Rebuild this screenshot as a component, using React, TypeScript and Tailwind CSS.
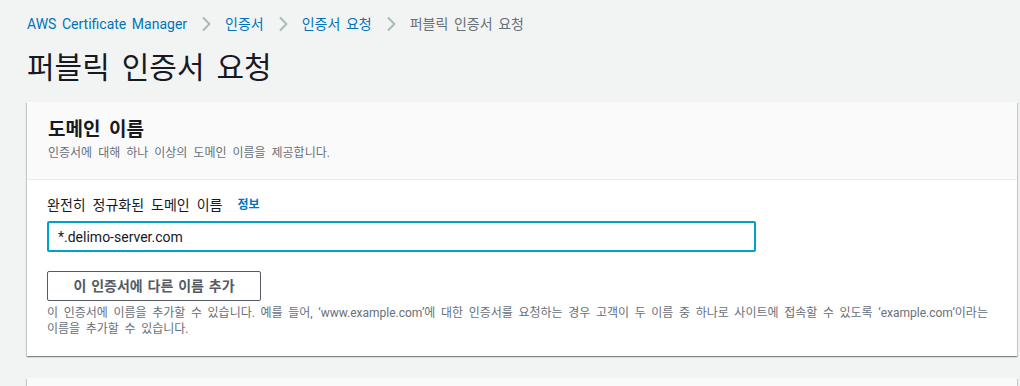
const crumbs = ["AWS Certificate Manager", "인증서", "인증서 요청"];

function Chevron() {
    return (
        <svg width="10" height="16" viewBox="0 0 10 16" className="mx-[14px] shrink-0">
            <polyline
                points="2,1.5 8.5,8 2,14.5"
                fill="none"
                stroke="#aab7b8"
                strokeWidth="1.8"
            />
        </svg>
    );
}

function Breadcrumb() {
    return (
        <nav className="flex items-center h-[22px] text-[14px] [word-spacing:0.15em]">
            {crumbs.map((c) => (
                <div key={c} className="flex items-center">
                    <a className="text-[#0073bb] leading-[22px]">{c}</a>
                    <Chevron />
                </div>
            ))}
            <span className="text-[#687078] leading-[22px]">퍼블릭 인증서 요청</span>
        </nav>
    );
}

const cardShadow =
    "shadow-[0_1px_1px_0_rgba(0,28,36,0.3),1px_1px_1px_0_rgba(0,28,36,0.15),-1px_1px_1px_0_rgba(0,28,36,0.15)]";

export default function App() {
    return (
        <div
            className="h-screen overflow-hidden bg-[#f2f3f3] pl-[27px] pr-[3px] pt-[13px] text-[#16191f]"
            style={{ fontFamily: 'Roboto, "Noto Sans CJK KR", sans-serif' }}
        >
            <Breadcrumb />
            <h1 className="text-[30px] leading-[36px] mt-[15px] font-normal [word-spacing:0.15em]">
                퍼블릭 인증서 요청
            </h1>
            <div className={`mt-[16px] bg-white ${cardShadow}`}>
                <div className="bg-[#fafafa] border-b border-[#eaeded] px-[21px] pt-[15px] pb-[18px]">
                    <h2 className="text-[19px] leading-[26px] font-bold [word-spacing:0.2em]">
                        도메인 이름
                    </h2>
                    <p className="text-[12px] leading-[16px] text-[#687078] mt-[2px] [word-spacing:0.25em]">
                        인증서에 대해 하나 이상의 도메인 이름을 제공합니다.
                    </p>
                </div>
                <div className="px-[20px] pt-[14px] pb-[19px]">
                    <div className="flex items-center gap-[15px] h-[22px]">
                        <label className="text-[14px] leading-[22px] [word-spacing:0.25em]">
                            완전히 정규화된 도메인 이름
                        </label>
                        <a className="text-[12px] font-bold text-[#0073bb]">정보</a>
                    </div>
                    <input
                        readOnly
                        value="*.delimo-server.com"
                        className="mt-[5px] block w-[709px] h-[31px] border-2 border-[#00a1c9] rounded-[2px] px-[9px] text-[14px] text-[#16191f] outline-none bg-white"
                    />
                    <button className="mt-[19px] block w-[214px] h-[30px] border border-[#545b64] rounded-[2px] bg-white text-[14px] font-bold text-[#545b64] [word-spacing:0.1em]">
                        이 인증서에 다른 이름 추가
                    </button>
                    <p className="text-[12px] leading-[16px] text-[#687078] mt-[4px] [word-spacing:0.22em]">
                        이 인증서에 이름을 추가할 수 있습니다. 예를 들어, ‘www.example.com’에 대한 인증서를 요청하는 경우 고객이 두 이름 중 하나로 사이트에 접속할 수 있도록 ‘example.com’이라는
                        <br />
                        이름을 추가할 수 있습니다.
                    </p>
                </div>
            </div>
            <div className={`mt-[22px] h-[40px] bg-[#fafafa] ${cardShadow}`} />
        </div>
    );
}
